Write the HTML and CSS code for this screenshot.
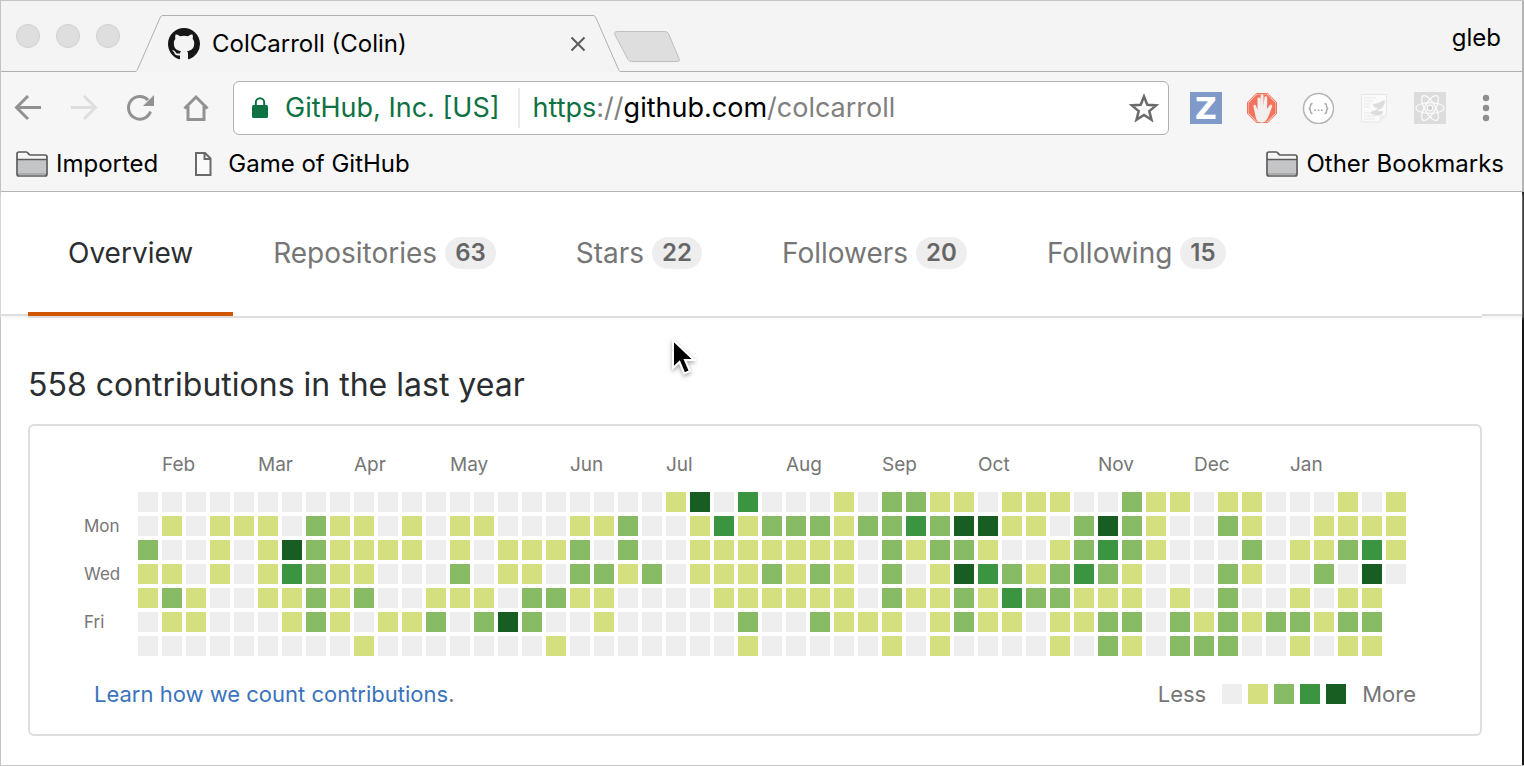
FILE: index.html
```html
<!DOCTYPE html>
<html lang="en">
<head>
<meta charset="utf-8">
<title>ColCarroll (Colin)</title>
<link rel="stylesheet" href="styles.css">
</head>
<body>
<div class="window">
  <header class="chrome">
    <div class="tabstrip">
      <div class="lights">
        <button class="light" aria-label="Close window"></button>
        <button class="light" aria-label="Minimize window"></button>
        <button class="light" aria-label="Zoom window"></button>
      </div>
      <svg class="tab-edge" viewBox="0 0 28 57" aria-hidden="true"><path d="M0 56.500c1.500 0 2-1 2.500-2L25 3c.8-1.700 1.500-2.500 3-2.500"/></svg>
      <div class="tab">
        <svg class="octocat" viewBox="0 0 16 16" aria-hidden="true"><path d="M8 0C3.580 0 0 3.580 0 8c0 3.540 2.290 6.530 5.470 7.590.4.070.55-.17.55-.38 0-.19-.01-.82-.01-1.490-2.010.37-2.530-.49-2.690-.94-.09-.23-.48-.94-.82-1.130-.28-.15-.68-.52-.01-.53.630-.01 1.080.58 1.230.82.720 1.210 1.870.87 2.330.66.070-.52.280-.87.510-1.070-1.780-.2-3.640-.89-3.640-3.950 0-.87.310-1.590.82-2.150-.08-.2-.36-1.020.08-2.120 0 0 .67-.21 2.200.82.640-.18 1.320-.27 2-.27s1.360.09 2 .27c1.530-1.040 2.200-.82 2.200-.82.440 1.100.160 1.920.08 2.120.510.560.820 1.270.820 2.150 0 3.070-1.870 3.750-3.650 3.950.290.250.540.730.540 1.480 0 1.070-.01 1.930-.01 2.200 0 .210.150.460.550.380A8.010 8.010 0 0 0 16 8c0-4.420-3.580-8-8-8z"/></svg>
        <span class="tab-title">ColCarroll (Colin)</span>
        <button class="tab-close" aria-label="Close tab"><svg viewBox="0 0 16 16"><path d="M1.500 1.500l13 13M14.500 1.500l-13 13"/></svg></button>
      </div>
      <svg class="tab-edge" viewBox="0 0 28 57" aria-hidden="true"><path d="M0 .5c1.500 0 2.200.8 3 2.500l22.500 51.500c.5 1 1 2 2.500 2"/></svg>
      <div class="strip-rest">
        <button class="new-tab" aria-label="New tab"><svg viewBox="0 0 68 34"><path d="M4.500 1.500h47q3 0 4 2l10.500 25q1.500 3-2 3H19q-3 0-4-2L2 5q-1.500-3.500 2.500-3.500z"/></svg></button>
        <button class="profile">gleb</button>
      </div>
    </div>

    <div class="toolbar">
      <button class="tool" aria-label="Back"><svg viewBox="0 0 32 32"><path class="stroke" d="M29 15.500H5M16 4L4.500 15.500 16 27"/></svg></button>
      <button class="tool faded" aria-label="Forward" disabled><svg viewBox="0 0 32 32"><path class="stroke" d="M3 15.500h24M16 4l11.500 11.500L16 27"/></svg></button>
      <button class="tool" aria-label="Reload"><svg viewBox="0 0 32 32"><path class="stroke" d="M26.500 19.500A11.300 11.300 0 1 1 24 8"/><path class="solid" d="M30 3v11H19z"/></svg></button>
      <button class="tool" aria-label="Home"><svg viewBox="0 0 32 32"><path class="stroke" d="M4.500 16.500L16 5l11.500 11.500M8 14v13.500h16V14" stroke-linejoin="miter"/></svg></button>
      <div class="address">
        <svg class="lock" viewBox="0 0 16 22" aria-hidden="true"><rect y="8" width="16" height="13" rx="1.500"/><path d="M3.800 9V5.500a4.200 4.200 0 0 1 8.400 0V9"/></svg>
        <span class="identity">GitHub, Inc. [US]</span>
        <div class="url" role="textbox" aria-label="Address" tabindex="0"><span class="secure">https</span>://<span class="host">github.com</span>/colcarroll</div>
        <button class="star" aria-label="Bookmark this page"><svg viewBox="0 0 32 32"><path d="M16 4.500l3.300 8.300 8.900.6-6.900 5.700 2.200 8.700L16 23l-7.500 4.800 2.200-8.700-6.900-5.700 8.900-.6z"/></svg></button>
      </div>
      <div class="extensions">
        <button class="ext" aria-label="Z"><svg viewBox="0 0 32 32"><rect width="32" height="32" fill="#7f9ac8"/><text x="16" y="27" text-anchor="middle" class="zed">Z</text></svg></button>
        <button class="ext" aria-label="Ad blocker"><svg viewBox="0 0 32 32"><path fill="#f9d5cc" stroke="#f4735c" d="M10.300 1.500h11.400l8.800 8.800v11.400l-8.800 8.800H10.300l-8.800-8.800V10.300z"/><path fill="#f4735c" d="M10.900 2.500h10.200L29.500 10.900v10.200L21.100 29.500H10.900L2.500 21.100V10.900z"/><path fill="#f2f0ee" d="M7.500 15c-.5-2.500 2-3 2.500-1l1.500 4V7c0-2 2.700-2 2.800 0v7l.3-10c.1-2 2.900-2 2.900 0v10l1-8.500c.3-2 2.800-1.700 2.700.3L21 17l2.500-3.500c1.200-1.500 3.500-.3 2.500 1.500L22.500 24c-1.500 4-3.500 6.500-7 6.500-4 0-5.700-3-6-6.500z"/></svg></button>
        <button class="ext" aria-label="JSON viewer"><svg viewBox="0 0 32 32"><circle cx="16.500" cy="16.500" r="15" fill="#fff" stroke="#b4b4b4" stroke-width="1.500"/><path fill="none" stroke="#a6a6a6" stroke-width="1.400" d="M10.500 11.500c-2 0-2 .8-2 2.200 0 1.800-.3 2.500-1.700 2.800 1.400.3 1.700 1 1.700 2.800 0 1.400 0 2.200 2 2.200M22.500 11.500c2 0 2 .8 2 2.200 0 1.800.3 2.500 1.700 2.800-1.400.3-1.700 1-1.700 2.800 0 1.400 0 2.200-2 2.200"/><path fill="#a6a6a6" d="M12.300 17.500h1.600v1.600h-1.600zM15.700 17.500h1.600v1.600h-1.600zM19.100 17.500h1.600v1.600h-1.600z"/></svg></button>
        <button class="ext" aria-label="Script editor"><svg viewBox="0 0 32 32"><path fill="#fafafa" stroke="#e6e6e6" d="M3.500 2.500h25V23l-7 7h-18z"/><path fill="none" stroke="#e9e9e9" d="M6 6h12M6 9h9M6 12h7M6 15h6M6 21h7M6 24h12M6 27h11"/><path fill="#dcdcdc" d="M15 12c3 0 8-2 11-4 2 2 0 6-2 8-2 1-5 2-4 3 2 0 5-1 5 1 0 3-5 4-8 3-2-1-5-1-4-3 2-1 6-2 7-4-2 0-5-1-5-4z"/><path fill="#ededed" d="M28.500 23l-7 7v-6z"/></svg></button>
        <button class="ext" aria-label="React tools"><svg viewBox="0 0 32 32"><rect width="32" height="32" fill="#dcdcdc"/><g fill="none" stroke="#fafafa" stroke-width="1.300"><ellipse cx="16" cy="16" rx="14" ry="5.300"/><ellipse cx="16" cy="16" rx="14" ry="5.300" transform="rotate(60 16 16)"/><ellipse cx="16" cy="16" rx="14" ry="5.300" transform="rotate(120 16 16)"/><circle cx="16" cy="16" r="2.800" fill="#d0d0d0"/></g></svg></button>
        <button class="ext" aria-label="Menu"><svg viewBox="0 0 32 32" fill="#8e8e8e"><circle cx="16" cy="6" r="3.200"/><circle cx="16" cy="16" r="3.200"/><circle cx="16" cy="26" r="3.200"/></svg></button>
      </div>
    </div>

    <nav class="bookmarks" aria-label="Bookmarks">
      <button class="bookmark"><svg class="folder" viewBox="0 0 32 26"><path d="M1 23V3q0-2 2-2h7q1.500 0 2.300 1.500T14.500 4H29q2 0 2 2v17q0 2-2 2H3q-2 0-2-2z" fill="#f6f6f6"/><path d="M2 9h28v15H2z" fill="#c4c5c7"/><path d="M2 22h28v2H2z" fill="#aaabad"/><path d="M1 8.500h30M1 23V3q0-2 2-2h7q1.500 0 2.300 1.500T14.500 4H29q2 0 2 2v17q0 2-2 2H3q-2 0-2-2z" fill="none" stroke="#5b5b5b" stroke-width="1.700"/></svg>Imported</button>
      <a class="bookmark page-link" href="#game"><svg class="sheet" viewBox="0 0 18 26"><path d="M2 2h9l5.500 5.500V24H2zM10.500 2v6H16.500"/></svg>Game of GitHub</a>
      <button class="bookmark other"><svg class="folder" viewBox="0 0 32 26"><path d="M1 23V3q0-2 2-2h7q1.500 0 2.300 1.500T14.500 4H29q2 0 2 2v17q0 2-2 2H3q-2 0-2-2z" fill="#f6f6f6"/><path d="M2 9h28v15H2z" fill="#c4c5c7"/><path d="M2 22h28v2H2z" fill="#aaabad"/><path d="M1 8.500h30M1 23V3q0-2 2-2h7q1.500 0 2.300 1.500T14.500 4H29q2 0 2 2v17q0 2-2 2H3q-2 0-2-2z" fill="none" stroke="#5b5b5b" stroke-width="1.700"/></svg>Other Bookmarks</button>
    </nav>
  </header>

  <main class="page">
    <div class="page-head">
      <nav class="profile-nav" aria-label="Profile">
        <a class="nav-item selected" href="#overview">Overview</a>
        <a class="nav-item" href="#repositories">Repositories <span class="counter">63</span></a>
        <a class="nav-item" href="#stars">Stars <span class="counter">22</span></a>
        <a class="nav-item" href="#followers">Followers <span class="counter">20</span></a>
        <a class="nav-item" href="#following">Following <span class="counter">15</span></a>
      </nav>
    </div>
    <section class="contributions">
      <h1 class="heading">558 contributions in the last year</h1>
      <div class="card">
        <table class="calendar" aria-label="Contributions by day">
          <thead><tr id="months"></tr></thead>
          <tbody id="days"></tbody>
        </table>
        <div class="card-foot">
          <div class="learn"><a href="#learn">Learn how we count contributions</a>.</div>
          <div class="legend">Less
            <span class="swatches"><i class="swatch l0"></i><i class="swatch l1"></i><i class="swatch l2"></i><i class="swatch l3"></i><i class="swatch l4"></i></span>
            More</div>
        </div>
      </div>
    </section>
  </main>
  <svg class="pointer" viewBox="0 0 28 42" aria-hidden="true"><path d="M3 3v28l6.500-6 4.800 11.500 5.500-2.400-4.800-11.100h9z"/></svg>
</div>
<script src="calendar.js"></script>
</body>
</html>
```

FILE: styles.css
```css
* { box-sizing: border-box; }

body {
  margin: 0;
  background: #fff;
  font-family: Inter, Roboto, "Liberation Sans", sans-serif;
  color: #2b2e31;
}

button {
  margin: 0;
  padding: 0;
  border: 0;
  background: none;
  font: inherit;
  color: inherit;
}

a { color: inherit; text-decoration: none; }
svg { display: block; }

.window {
  display: flex;
  flex-direction: column;
  position: relative;
  min-height: 100vh;
  border-top: 1px solid #c4c4c4;
  border-left: 1px solid #c4c4c4;
  border-bottom: 1px solid #c4c4c4;
}

.chrome {
  background: #f6f6f6;
  border-right: 2px solid #b4b4b4;
  border-bottom: 1px solid #b0b0b0;
  color: #000;
}

/* Tab strip */
.tabstrip { display: flex; height: 71px; align-items: flex-end; background: #f4f4f4; }

.lights {
  display: flex;
  gap: 16px;
  width: 134px;
  height: 71px;
  padding: 23px 0 0 15px;
  border-bottom: 1px solid #b0b0b0;
}

.light {
  width: 24px;
  height: 24px;
  border: 1px solid #cfcfcf;
  border-radius: 50%;
  background: #dedede;
}

.tab-edge {
  width: 28px;
  height: 57px;
  fill: none;
  stroke: #b0b0b0;
}

.tab {
  display: flex;
  align-items: center;
  width: 430px;
  height: 57px;
  padding: 0 7px 0 5px;
  border-top: 1px solid #b0b0b0;
}

.octocat { width: 32px; height: 32px; fill: #161616; }
.tab-title { flex: 1; margin-left: 12px; font-size: 24px; line-height: 32px; }
.tab-close svg { width: 16px; height: 16px; stroke: #5c5c5c; stroke-width: 2; }

.strip-rest {
  flex: 1;
  display: flex;
  justify-content: space-between;
  height: 71px;
  padding: 22px 21px 0 0;
  border-bottom: 1px solid #b0b0b0;
}

.new-tab { margin: 7px 0 0 -8px; align-self: flex-start; }
.new-tab svg { width: 68px; height: 34px; fill: #dedede; stroke: #c0c0c0; }
.profile { align-self: flex-start; font-size: 24px; line-height: 30px; }

/* Toolbar */
.toolbar {
  display: flex;
  align-items: center;
  gap: 24px;
  padding: 9px 20px 0 11px;
}

.tool, .ext, .star { flex: none; width: 32px; height: 32px; }
.tool .stroke { fill: none; stroke: #929292; stroke-width: 3; }
.tool .solid { fill: #929292; }
.faded .stroke { stroke: #dedede; }

.address {
  flex: 1;
  display: flex;
  align-items: center;
  height: 54px;
  margin: 0 -3px;
  padding: 0 8px 0 18px;
  border: 1px solid #b0b0b0;
  border-radius: 6px;
  background: #fff;
  font-size: 27px;
  line-height: 40px;
  white-space: nowrap;
}

.lock { width: 16px; height: 22px; fill: #0e7243; }
.lock path { fill: none; stroke: #0e7243; stroke-width: 2; }
.identity { margin-left: 17px; padding-right: 18px; border-right: 2px solid #ebebeb; color: #0e7243; }
.url { flex: 1; margin-left: 13px; color: #808080; }
.secure { color: #0e7243; }
.host { color: #000; }
.star svg { fill: none; stroke: #6a6a6a; stroke-width: 2.5; }

.extensions { display: flex; gap: 24px; }
.zed { fill: #fff; font: bold 30px "DejaVu Sans", sans-serif; }

/* Bookmarks bar */
.bookmarks {
  display: flex;
  align-items: center;
  height: 56px;
  padding: 1px 18px 0 15px;
  gap: 36px;
  font-size: 24px;
  line-height: 32px;
}

.bookmark { display: flex; align-items: center; gap: 8px; }
.page-link { gap: 16px; }
.other { margin-left: auto; }
.folder { width: 32px; height: 26px; }
.sheet { width: 18px; height: 26px; fill: #fafafa; stroke: #6a6a6a; stroke-width: 2; }

/* Profile page */
.page { flex: 1; border-right: 2px solid #161616; }
.page-head { border-bottom: 2px solid #dedede; box-shadow: 0 2px 3px #f3f3f3; }

.profile-nav {
  display: flex;
  position: relative;
  height: 126px;
  margin: 0 40px -4px 27px;
  border-bottom: 2px solid #dedede;
  background: #fff;
}

.nav-item {
  display: flex;
  align-items: center;
  gap: 8px;
  padding: 2px 40px 0;
  border-bottom: 4px solid transparent;
  color: #767676;
  font-size: 28px;
  line-height: 40px;
}

.nav-item.selected { border-color: #d15704; color: #2b2e31; }

.counter {
  padding: 0 10px;
  border-radius: 16px;
  background: #eee;
  color: #666;
  font-size: 24px;
  font-weight: 600;
  line-height: 32px;
}

.contributions { padding: 48px 40px 28px 27px; }

.heading {
  margin: 0 0 18px;
  font-size: 32px;
  font-weight: 400;
  line-height: 42px;
}

.card {
  padding: 20px 64px 24px 50px;
  border: 2px solid #dedede;
  border-radius: 6px;
}

.calendar { border-spacing: 4px; color: #767676; }
.calendar th { padding: 0; font-weight: 400; text-align: left; white-space: nowrap; }
.calendar thead th { height: 38px; font-size: 19px; line-height: 30px; vertical-align: top; }
.calendar tbody th { width: 50px; height: 20px; font-size: 17px; line-height: 20px; }
.calendar td { width: 20px; height: 20px; padding: 0; }

.l0 { background: #eee; }
.l1 { background: #d6df80; }
.l2 { background: #87bb65; }
.l3 { background: #3b943f; }
.l4 { background: #185d21; }

.card-foot {
  display: flex;
  justify-content: space-between;
  padding: 18px 0 0 14px;
  color: #767676;
  font-size: 22px;
  line-height: 32px;
}

.learn a { color: #3b73bd; }
.legend { display: flex; align-items: center; gap: 16px; }
.swatches { display: flex; gap: 6px; }
.swatch { width: 20px; height: 20px; }

.pointer {
  position: absolute;
  left: 669px;
  top: 336px;
  width: 28px;
  height: 42px;
  fill: #000;
  stroke: #fff;
  stroke-width: 2;
  filter: drop-shadow(0 2px 2px rgba(0, 0, 0, 0.35));
}
```

FILE: calendar.js
```js
// Month name and the number of weeks it covers.
const months = [["", 1], ["Feb", 4], ["Mar", 4], ["Apr", 4], ["May", 5], ["Jun", 4], ["Jul", 5],
  ["Aug", 4], ["Sep", 4], ["Oct", 5], ["Nov", 4], ["Dec", 4], ["Jan", 5]];

// One row per weekday, one digit per week: the activity level from 0 to 4.
const days = [
  ["", "00000000000000000" + "000001403000102211011" + "100211011000101"],
  ["Mon", "01011102110101100" + "011200131222122324411" + "024210021001111"],
  ["", "20010142111101011" + "120200111111102122100" + "123210002011231"],
  ["Wed", "11010132110002011" + "022120111212102014321" + "232100021002040"],
  ["", "12100112120011102" + "211000011111102112132" + "21110102001011-"],
  ["Fri", "01100012101120242" + "001000002002111012110" + "11220212122122-"],
  ["", "00000000010000000" + "100000001000001010000" + "10210222001011-"]
];

document.getElementById("months").innerHTML = "<td></td>" +
  months.map(([name, weeks]) => `<th colspan="${weeks}">${name}</th>`).join("");

document.getElementById("days").innerHTML = days.map(([name, levels]) =>
  `<tr><th>${name}</th>` +
  [...levels].map(l => l === "-" ? "<td></td>" : `<td class="l${l}"></td>`).join("") +
  "</tr>").join("");
```
